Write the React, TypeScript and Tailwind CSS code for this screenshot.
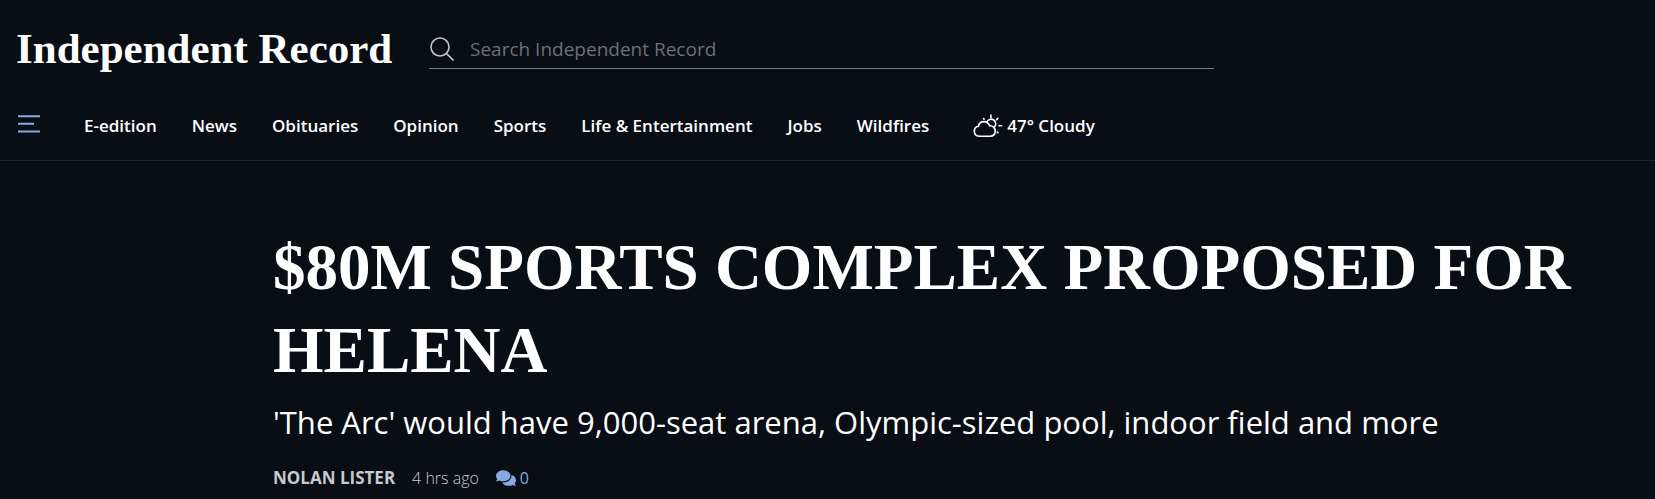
import { FaComments } from "react-icons/fa";

type NavItem = {
  label: string;
  href: string;
};

const navItems: NavItem[] = [
  { label: "E-edition", href: "#e-edition" },
  { label: "News", href: "#news" },
  { label: "Obituaries", href: "#obituaries" },
  { label: "Opinion", href: "#opinion" },
  { label: "Sports", href: "#sports" },
  { label: "Life & Entertainment", href: "#life-entertainment" },
  { label: "Jobs", href: "#jobs" },
  { label: "Wildfires", href: "#wildfires" },
];

function SearchIcon() {
  return (
    <svg
      width="24"
      height="24"
      viewBox="0 0 24 24"
      fill="none"
      stroke="currentColor"
      strokeWidth="1.6"
    >
      <circle cx="10" cy="10" r="9" />
      <path d="M16.5 16.5 23.5 23.5" />
    </svg>
  );
}

function MenuIcon() {
  return (
    <svg
      width="22"
      height="18"
      viewBox="0 0 22 18"
      fill="none"
      stroke="currentColor"
      strokeWidth="2"
    >
      <path d="M0 1.2H22M0 8.7H16M0 16.4H22" />
    </svg>
  );
}

function CloudyIcon() {
  return (
    <svg
      width="30"
      height="24"
      viewBox="0 0 30 24"
      fill="none"
      stroke="currentColor"
      strokeWidth="1.6"
      strokeLinecap="round"
      strokeLinejoin="round"
    >
      <path d="M6 22.2a5 5 0 0 1-.6-9.9C6 9.5 8.3 7.6 11 7.6c2.7 0 4.8 1.7 5.6 4.2 3.100-.4 5.600 2 5.600 5.200s-2 5.200-5 5.200Z" />
      <path d="M13.800 8.200a4.600 4.600 0 1 1 7.400 5" />
      <path d="M17.900 1V3.800M24.800 4.400 23.600 5.600M26 11.700h2.600M24.200 18l.7.8M10.600 4.600l.5.500" />
    </svg>
  );
}

function Header() {
  return (
    <header className="border-b border-[#22272e]">
      <div className="flex items-center px-4 pt-5">
        <a
          href="#home"
          className="w-[377px] shrink-0 whitespace-nowrap font-['Liberation_Serif',serif] text-[43px] leading-[58px] font-bold"
        >
          Independent Record
        </a>
        <form
          role="search"
          className="ml-9 flex h-10 max-w-[785px] flex-1 items-center border-b border-[#77797d] pl-px text-[#c4c6c8]"
        >
          <button type="submit" aria-label="Search">
            <SearchIcon />
          </button>
          <input
            type="search"
            aria-label="Search Independent Record"
            placeholder="Search Independent Record"
            className="ml-4 min-w-0 flex-1 bg-transparent text-[19px] leading-7 outline-none placeholder:text-[#6d7074]"
          />
        </form>
      </div>
      <nav className="flex h-[82px] items-center px-[18px] pt-[14px] text-[17px] leading-6 font-semibold whitespace-nowrap">
        <button type="button" aria-label="Menu" className="pb-1 text-[#86a9e4]">
          <MenuIcon />
        </button>
        <ul className="ml-11 flex gap-[35px]">
          {navItems.map((item) => (
            <li key={item.label}>
              <a href={item.href}>{item.label}</a>
            </li>
          ))}
        </ul>
        <a href="#weather" className="ml-11 flex items-center gap-1">
          <CloudyIcon />
          47° Cloudy
        </a>
      </nav>
    </header>
  );
}

function Article() {
  return (
    <article className="pt-[65px] pr-16 pl-[273px]">
      <h1 className="font-['Liberation_Serif',serif] text-[65px] leading-[83px] font-bold uppercase">
        $80M sports complex proposed for Helena
      </h1>
      <p className="mt-1 text-[31px] leading-[52px]">
        'The Arc' would have 9,000-seat arena, Olympic-sized pool, indoor field
        and more
      </p>
      <div className="mt-[18px] flex items-center gap-[17px] text-base leading-6 text-[#c8c9ca]">
        <a href="#nolan-lister" className="text-[17px] font-bold uppercase">
          Nolan Lister
        </a>
        <time className="font-light">4 hrs ago</time>
        <a href="#comments" className="flex items-center gap-1 text-[#86a9e4]">
          <FaComments size={20} />0
        </a>
      </div>
    </article>
  );
}

export default function App() {
  return (
    <main className="min-h-screen bg-[#090d14] font-['Open_Sans','Noto_Sans',sans-serif] text-white">
      <Header />
      <Article />
    </main>
  );
}
